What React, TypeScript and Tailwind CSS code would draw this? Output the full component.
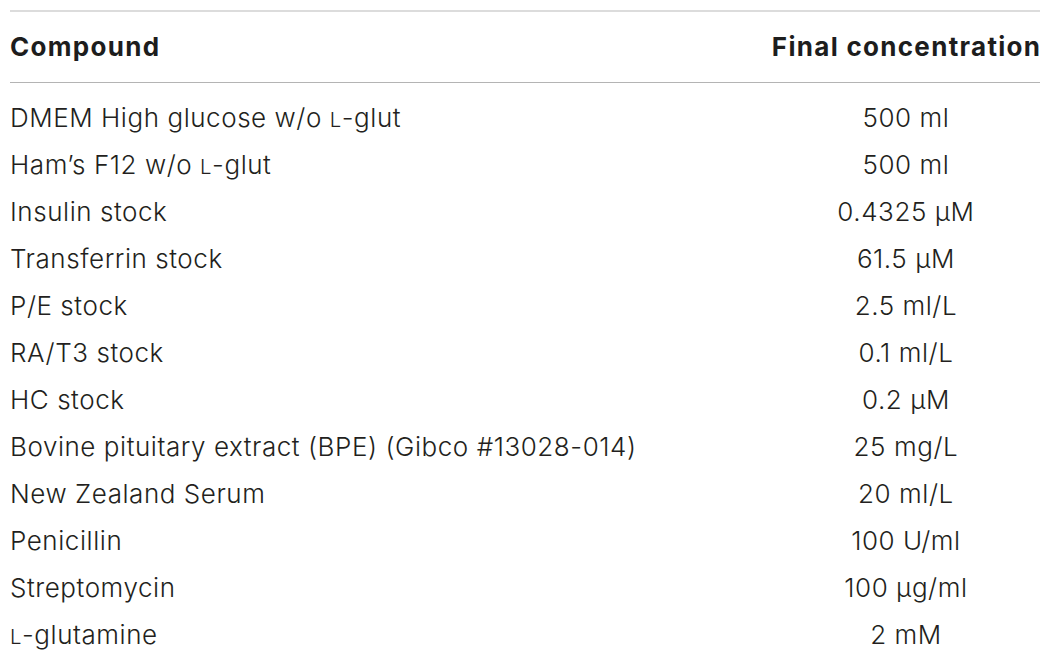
const SmallL = () => <span className="text-[0.78em]">L</span>;

const rows: { name: React.ReactNode; value: React.ReactNode }[] = [
  { name: <>DMEM High glucose w/o <SmallL />-glut</>, value: "500 ml" },
  { name: <>Ham’s F12 w/o <SmallL />-glut</>, value: "500 ml" },
  { name: "Insulin stock", value: "0.4325 μM" },
  { name: "Transferrin stock", value: "61.5 μM" },
  { name: "P/E stock", value: "2.5 ml/L" },
  { name: "RA/T3 stock", value: "0.1 ml/L" },
  { name: "HC stock", value: "0.2 μM" },
  { name: "Bovine pituitary extract (BPE) (Gibco #13028-014)", value: "25 mg/L" },
  { name: "New Zealand Serum", value: "20 ml/L" },
  { name: "Penicillin", value: "100 U/ml" },
  { name: "Streptomycin", value: "100 μg/ml" },
  { name: <><SmallL />-glutamine</>, value: "2 mM" },
];

export default function App() {
  return (
    <div className="w-[1050px] h-[666px] bg-white px-[10px] pt-[10px] font-['Inter','Liberation_Sans',sans-serif] text-[#231f20]">
      <table className="w-full border-collapse">
        <thead>
          <tr className="border-t-2 border-b border-t-[#dcdcdc] border-b-[#b4b4b4]">
            <th className="h-[71px] p-0 text-left text-[26px] font-bold tracking-[1.3px] text-[#1d1d1d]">Compound</th>
            <th className="h-[71px] w-px p-0 text-right text-[26px] font-bold tracking-[1.3px] text-[#1d1d1d] whitespace-nowrap">
              <span className="-mr-[1.3px]">Final concentration</span>
            </th>
          </tr>
        </thead>
        <tbody className="text-[26px] font-light tracking-[0.55px]">
          <tr>
            <td className="h-[12px] p-0" colSpan={2}></td>
          </tr>
          {rows.map((r, i) => (
            <tr key={i} className="h-[47px]">
              <td className="p-0 text-left whitespace-nowrap">{r.name}</td>
              <td className="p-0 text-center whitespace-nowrap">{r.value}</td>
            </tr>
          ))}
        </tbody>
      </table>
    </div>
  );
}
